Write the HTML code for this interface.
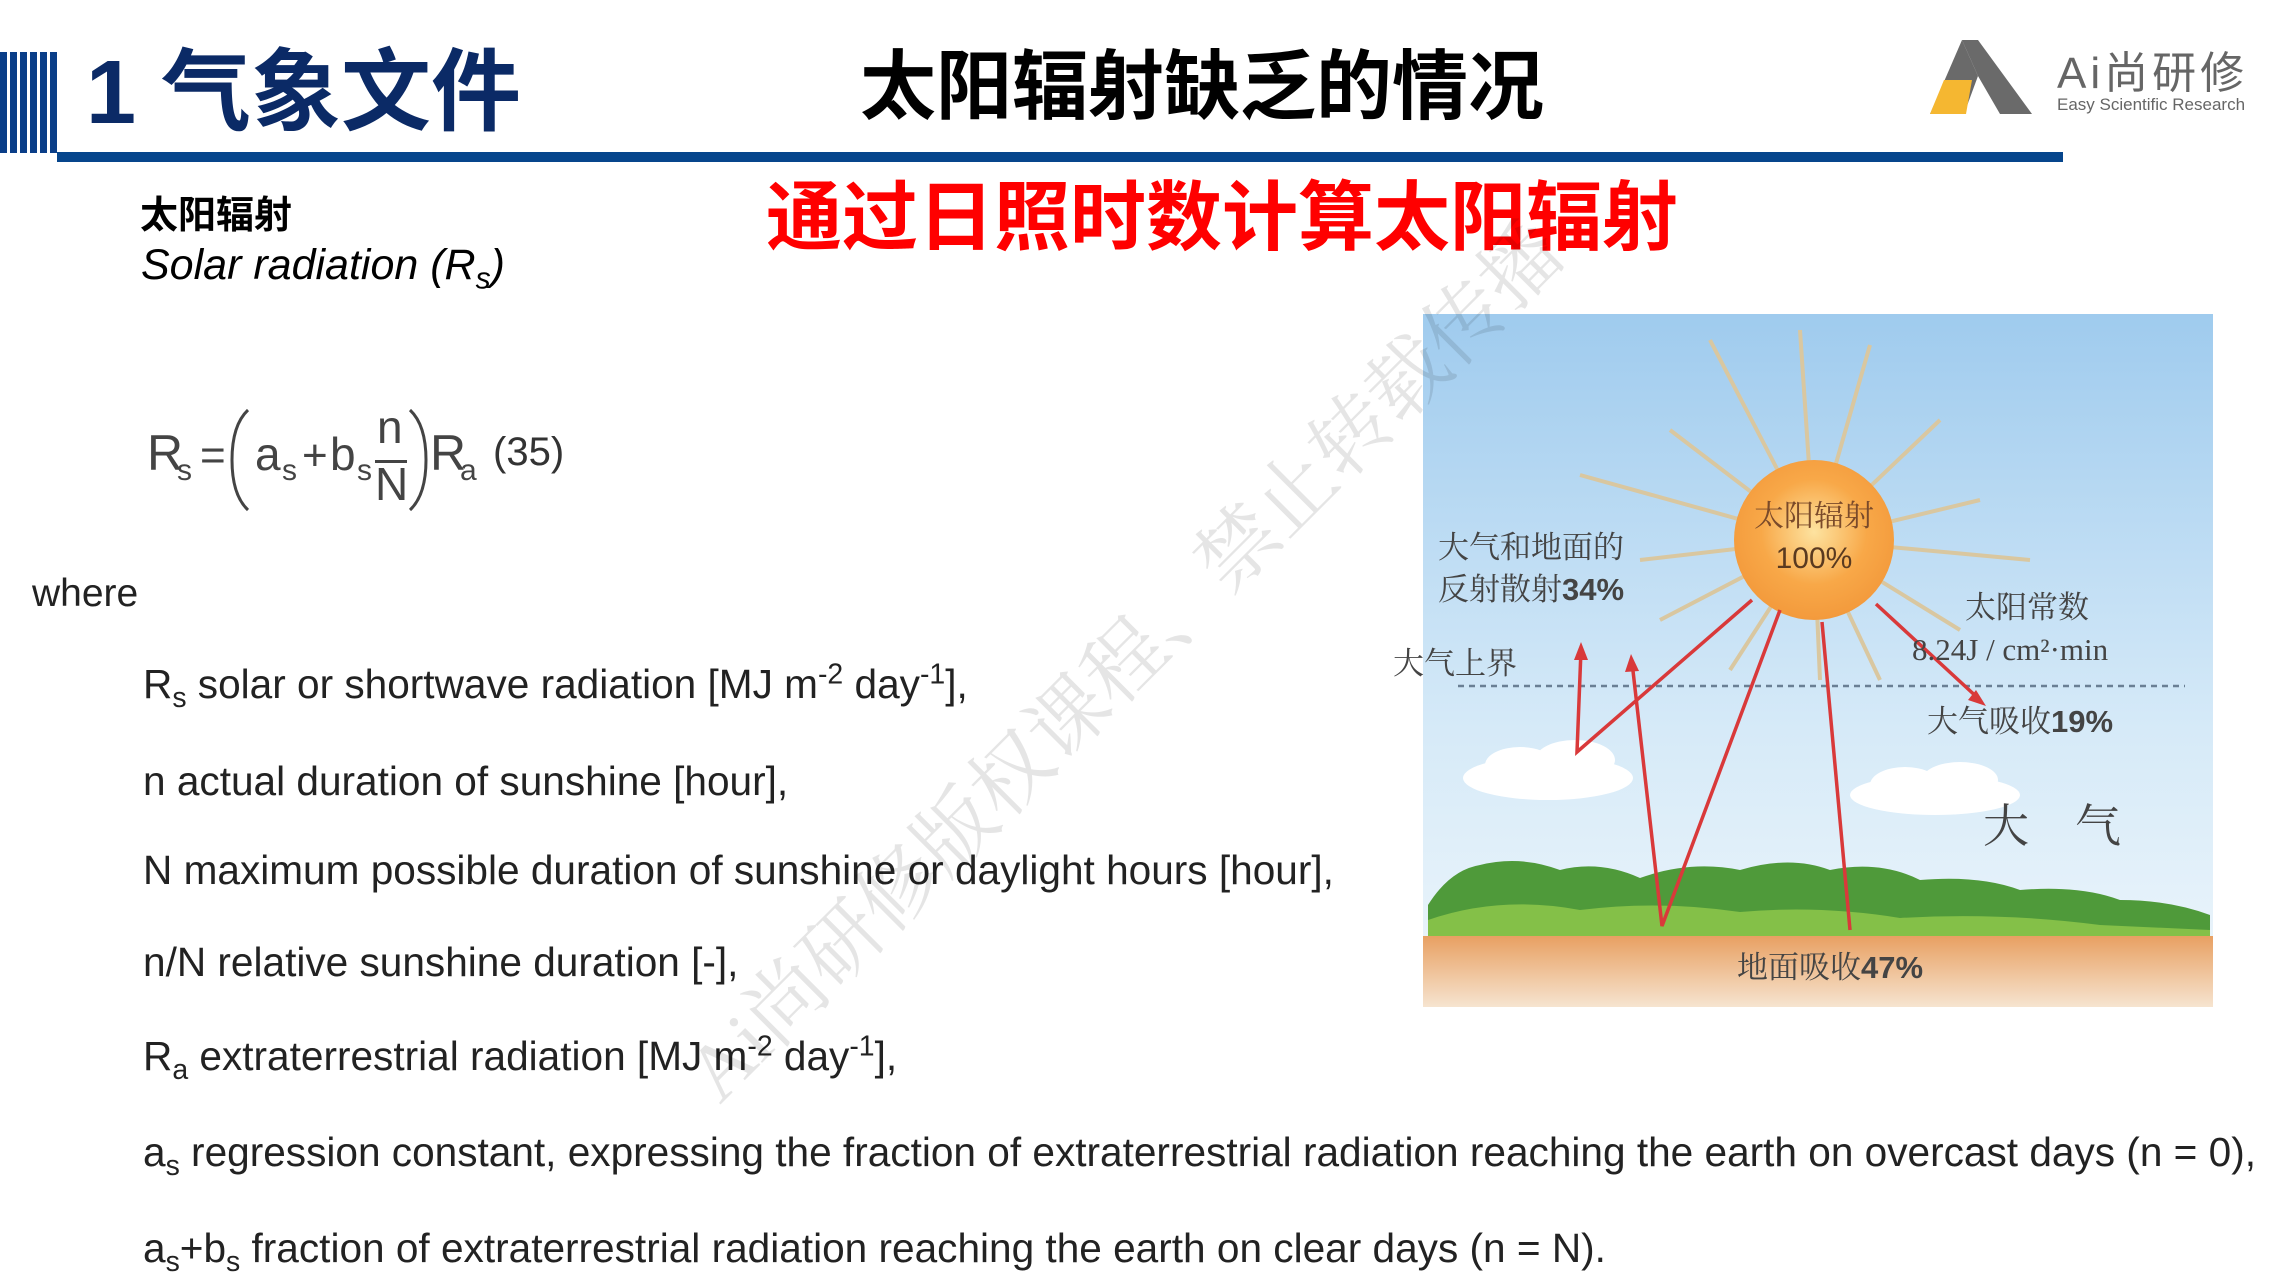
<!DOCTYPE html>
<html><head><meta charset="utf-8"><style>
html,body{margin:0;padding:0;background:#fff;}
body{width:2277px;height:1281px;position:relative;overflow:hidden;font-family:"Liberation Sans","Noto Sans CJK SC",sans-serif;}
.a{position:absolute;white-space:nowrap;}
.ln{position:absolute;left:143px;font-size:40.6px;color:#222;white-space:nowrap;line-height:1;}
sub,sup{font-size:0.7em;line-height:0;}
</style></head><body>
<div class="a" style="left:0;top:52px;width:58px;height:101px;background:repeating-linear-gradient(90deg,#0a3e88 0 7px,#fff 7px 10px);"></div>
<div class="a" style="left:57px;top:152px;width:2006px;height:10px;background:#06458c;"></div>
<div class="a" style="left:86px;top:48px;font-size:90px;font-weight:bold;color:#0b2a66;line-height:1;">1 气象文件</div>
<div class="a" style="left:860px;top:50px;font-size:76px;font-weight:bold;color:#000;line-height:1;">太阳辐射缺乏的情况</div>
<svg class="a" style="left:1920px;top:36px" width="340" height="84">
<polygon points="42,4 58,4 112,78 80,78 58,40" fill="#6a6a6a"/>
<polygon points="42,4 58,40 44,78 10,78" fill="#6a6a6a"/>
<polygon points="24,44 52,44 46,78 10,78" fill="#f5b731"/>
<text x="137" y="52" font-size="44" fill="#666" letter-spacing="4" font-family="Liberation Sans,Noto Sans CJK SC,sans-serif">Ai尚研修</text>
<text x="137" y="74" font-size="17" fill="#666" font-family="Liberation Sans,sans-serif">Easy Scientific Research</text>
</svg>
<div class="a" style="left:140px;top:197px;font-size:38px;font-weight:bold;color:#000;line-height:1;">太阳辐射</div>
<div class="a" style="left:141px;top:244px;font-size:43px;font-style:italic;color:#000;line-height:1;">Solar radiation (R<sub>s</sub>)</div>
<div class="a" style="left:766px;top:181px;font-size:76px;font-weight:bold;color:#ff0000;line-height:1;">通过日照时数计算太阳辐射</div>

<svg class="a" style="left:0;top:380px" width="600" height="150" font-family="Liberation Sans,sans-serif" fill="#444">
<text x="147" y="90" font-size="50">R</text><text x="177" y="100" font-size="30">s</text>
<text x="200" y="90" font-size="44">=</text>
<path d="M248,30 Q232,45 232,80 Q232,115 248,130" stroke="#444" stroke-width="3" fill="none"/>
<text x="255" y="90" font-size="46">a</text><text x="282" y="100" font-size="30">s</text>
<text x="302" y="90" font-size="44">+</text>
<text x="330" y="90" font-size="46">b</text><text x="357" y="100" font-size="30">s</text>
<text x="377" y="63" font-size="46">n</text>
<rect x="375" y="80" width="32" height="3" fill="#444"/>
<text x="375" y="120" font-size="46">N</text>
<path d="M410,30 Q426,45 426,80 Q426,115 410,130" stroke="#444" stroke-width="3" fill="none"/>
<text x="430" y="90" font-size="50">R</text><text x="460" y="100" font-size="30">a</text>
<text x="493" y="85" font-size="40" fill="#333">(35)</text>
</svg>

<div class="a" style="left:32px;top:572px;font-size:39px;color:#222;">where</div>
<div class="ln" style="top:664px">R<sub>s</sub> solar or shortwave radiation [MJ m<sup>-2</sup> day<sup>-1</sup>],</div>
<div class="ln" style="top:761px">n actual duration of sunshine [hour],</div>
<div class="ln" style="top:850px">N maximum possible duration of sunshine or daylight hours [hour],</div>
<div class="ln" style="top:942px">n/N relative sunshine duration [-],</div>
<div class="ln" style="top:1036px">R<sub>a</sub> extraterrestrial radiation [MJ m<sup>-2</sup> day<sup>-1</sup>],</div>
<div class="ln" style="top:1132px">a<sub>s</sub> regression constant, expressing the fraction of extraterrestrial radiation reaching the earth on overcast days (n = 0),</div>
<div class="ln" style="top:1228px">a<sub>s</sub>+b<sub>s</sub> fraction of extraterrestrial radiation reaching the earth on clear days (n = N).</div>

<svg class="a" style="left:0;top:0" width="2277" height="1281" font-family="Liberation Serif,Noto Serif CJK SC,serif">
<defs>
<linearGradient id="sky" x1="0" y1="0" x2="0" y2="1"><stop offset="0" stop-color="#9fcbee"/><stop offset="0.6" stop-color="#d6eaf8"/><stop offset="1" stop-color="#eef6fb"/></linearGradient>
<radialGradient id="sun" cx="0.5" cy="0.45" r="0.55"><stop offset="0" stop-color="#fde3a0"/><stop offset="0.6" stop-color="#f8a848"/><stop offset="1" stop-color="#f39a3c"/></radialGradient>
<linearGradient id="soil" x1="0" y1="0" x2="0" y2="1"><stop offset="0" stop-color="#e8a062"/><stop offset="1" stop-color="#f6e4d0"/></linearGradient>
</defs>
<rect x="1423" y="314" width="790" height="693" fill="url(#sky)"/>
<g stroke="#d9c7a0" stroke-width="4">
<line x1="1814" y1="540" x2="1710" y2="340"/><line x1="1814" y1="540" x2="1800" y2="330"/><line x1="1814" y1="540" x2="1870" y2="345"/>
<line x1="1814" y1="540" x2="1940" y2="420"/><line x1="1814" y1="540" x2="1980" y2="500"/><line x1="1814" y1="540" x2="2030" y2="560"/>
<line x1="1814" y1="540" x2="1960" y2="630"/><line x1="1814" y1="540" x2="1880" y2="680"/><line x1="1814" y1="540" x2="1820" y2="680"/>
<line x1="1814" y1="540" x2="1730" y2="670"/><line x1="1814" y1="540" x2="1660" y2="620"/><line x1="1814" y1="540" x2="1640" y2="560"/>
<line x1="1814" y1="540" x2="1580" y2="475"/><line x1="1814" y1="540" x2="1670" y2="430"/>
</g>
<circle cx="1814" cy="540" r="80" fill="url(#sun)"/>
<text x="1814" y="526" font-size="30" fill="#7a4a2a" text-anchor="middle">太阳辐射</text>
<text x="1814" y="568" font-size="30" fill="#5a3a20" text-anchor="middle" font-family="Liberation Sans,sans-serif">100%</text>
<line x1="1458" y1="686" x2="2185" y2="686" stroke="#6a7f94" stroke-width="2.5" stroke-dasharray="6,5"/>
<g fill="#fff"><ellipse cx="1548" cy="778" rx="85" ry="22"/><ellipse cx="1520" cy="765" rx="35" ry="18"/><ellipse cx="1575" cy="760" rx="40" ry="20"/>
<ellipse cx="1935" cy="795" rx="85" ry="20"/><ellipse cx="1905" cy="785" rx="35" ry="18"/><ellipse cx="1960" cy="780" rx="38" ry="18"/></g>
<path d="M1428,905 Q1450,870 1480,865 Q1520,855 1560,870 Q1600,860 1640,878 Q1690,860 1740,870 Q1790,855 1830,870 Q1880,860 1920,880 Q1980,875 2020,890 Q2080,885 2120,900 Q2170,900 2210,915 L2210,940 L1428,940 Z" fill="#4f9a3a"/>
<path d="M1428,920 Q1500,895 1580,910 Q1660,900 1740,912 Q1820,905 1900,918 Q2000,912 2100,925 L2210,930 L2210,940 L1428,940 Z" fill="#84c048"/>
<rect x="1423" y="936" width="790" height="71" fill="url(#soil)"/>
<g stroke="#d9393a" stroke-width="3.5" fill="none">
<polyline points="1752,600 1577,752 1581,650"/>
<polyline points="1632,662 1662,926 1780,610"/>
<line x1="1822" y1="622" x2="1850" y2="930"/>
<line x1="1876" y1="604" x2="1980" y2="700"/>
</g>
<g fill="#d9393a"><polygon points="1581,642 1574,660 1588,660"/><polygon points="1631,654 1625,672 1639,671"/><polygon points="1986,706 1968,700 1976,690"/></g>
<g fill="#444" font-size="31">
<text x="1438" y="558">大气和地面的</text>
<text x="1438" y="600">反射散射<tspan font-family="Liberation Sans,sans-serif" font-weight="bold">34%</tspan></text>
<text x="1393" y="674">大气上界</text>
<text x="1965" y="618">太阳常数</text>
<text x="1912" y="660" font-size="31">8.24J / cm²·min</text>
<text x="1927" y="732">大气吸收<tspan font-family="Liberation Sans,sans-serif" font-weight="bold">19%</tspan></text>
<text x="1983" y="842" font-size="46">大　气</text>
<text x="1737" y="978">地面吸收<tspan font-family="Liberation Sans,sans-serif" font-weight="bold">47%</tspan></text>
</g>
<text x="0" y="0" transform="translate(720,1105) rotate(-45)" font-size="80" fill="#000" fill-opacity="0.1" font-family="Liberation Serif,Noto Serif CJK SC,serif">Ai尚研修版权课程、禁止转载传播</text>
</svg>
</body></html>
